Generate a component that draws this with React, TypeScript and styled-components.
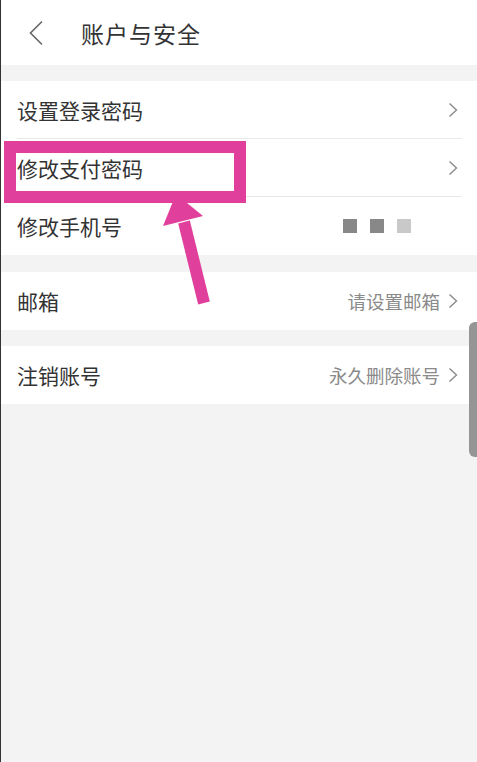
import styled, { createGlobalStyle } from "styled-components";

const GlobalStyle = createGlobalStyle`
  html, body {
    margin: 0;
    padding: 0;
    background: #f3f3f3;
  }
  * {
    box-sizing: border-box;
  }
`;

const Page = styled.div`
  position: relative;
  min-height: 100vh;
  border-left: 1px solid #333;
  background: #f3f3f3;
  font-family: "Noto Sans CJK SC", "Noto Sans", sans-serif;
  color: #333;
  overflow: hidden;
`;

const Header = styled.header`
  height: 65px;
  background: #fff;
  display: flex;
  align-items: center;
  padding-left: 27px;
`;

const BackIcon = styled.svg`
  width: 16px;
  height: 26px;
  margin-right: 37px;
`;

const Title = styled.h1`
  margin: 0;
  font-size: 23px;
  font-weight: 400;
  letter-spacing: 1px;
  color: #333;
`;

const Group = styled.section<{ $gap: number }>`
  margin-top: ${(p) => p.$gap}px;
  background: #fff;
`;

const Row = styled.div<{ $last?: boolean }>`
  height: 58px;
  margin: 0 15px 0 16px;
  padding-right: 4px;
  display: flex;
  align-items: center;
  border-bottom: ${(p) => (p.$last ? "none" : "1px solid #e9e9e9")};
`;

const Label = styled.span`
  flex: 1;
  font-size: 21px;
  color: #333;
`;

const Value = styled.span`
  font-size: 18.5px;
  color: #8a8a8a;
  margin-right: 8px;
`;

const Mask = styled.div`
  display: flex;
  gap: 13px;
  margin-right: 47px;
`;

const Dot = styled.span<{ $light?: boolean }>`
  width: 14px;
  height: 14px;
  background: ${(p) => (p.$light ? "#c9c9c9" : "#888")};
`;

const Chevron = styled.svg`
  width: 10px;
  height: 16px;
`;

const Scrollbar = styled.div`
  position: absolute;
  right: 0;
  top: 322px;
  width: 8px;
  height: 135px;
  background: #959595;
  border-radius: 6px 0 0 6px;
`;

const Annotation = styled.svg`
  position: absolute;
  left: -1px;
  top: 0;
  width: 477px;
  height: 320px;
  pointer-events: none;
`;

const Arrow = () => (
  <Chevron viewBox="0 0 10 16">
    <path d="M1.5 1.5 L8.5 8 L1.5 14.5" fill="none" stroke="#8a8a8a" strokeWidth="1.4" />
  </Chevron>
);

const App = () => {
  return (
    <>
      <GlobalStyle />
      <Page>
        <Header>
          <BackIcon viewBox="0 0 16 26">
            <path d="M14 1.5 L2.5 13 L14 24.5" fill="none" stroke="#666" strokeWidth="1.6" />
          </BackIcon>
          <Title>账户与安全</Title>
        </Header>

        <Group $gap={16}>
          <Row>
            <Label>设置登录密码</Label>
            <Arrow />
          </Row>
          <Row>
            <Label>修改支付密码</Label>
            <Arrow />
          </Row>
          <Row $last>
            <Label>修改手机号</Label>
            <Mask>
              <Dot />
              <Dot />
              <Dot $light />
            </Mask>
          </Row>
        </Group>

        <Group $gap={17}>
          <Row $last>
            <Label>邮箱</Label>
            <Value>请设置邮箱</Value>
            <Arrow />
          </Row>
        </Group>

        <Group $gap={16}>
          <Row $last>
            <Label>注销账号</Label>
            <Value>永久删除账号</Value>
            <Arrow />
          </Row>
        </Group>

        <Scrollbar />

        <Annotation viewBox="0 0 477 320">
          <rect x="10" y="147" width="230" height="50" fill="none" stroke="#e0409b" strokeWidth="12" />
          <line x1="204" y1="303" x2="184" y2="222" stroke="#e0409b" strokeWidth="12" />
          <polygon points="176,194 163,226 203,216" fill="#e0409b" />
        </Annotation>
      </Page>
    </>
  );
};

export default App;
